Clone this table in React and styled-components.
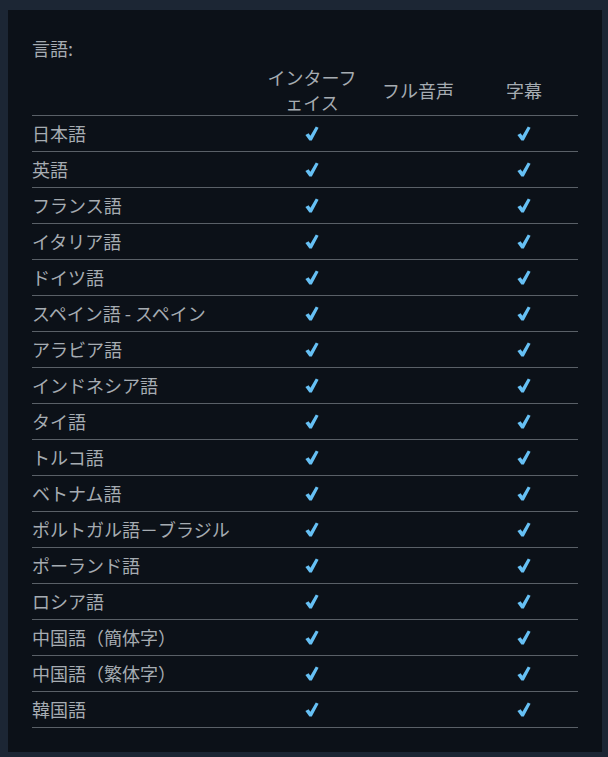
import React from "react";
import styled, { createGlobalStyle } from "styled-components";

const Global = createGlobalStyle`
  html, body { background: #1c2634; }
  body {
    margin: 0;
    padding: 10px 6px 5px 8px;
    font-family: "Noto Sans CJK JP", "Noto Sans", sans-serif;
  }
`;

const Panel = styled.div`
  background: #0c1118;
  padding: 26px 24px 24px;
  color: #a6acb2;
  font-size: 18px;
`;

const Title = styled.div`
  line-height: 24px;
  height: 24px;
  margin-bottom: 5px;
`;

const Row = styled.div`
  display: grid;
  grid-template-columns: 230px 100px 112px 100px;
  align-items: center;
  border-bottom: 1px solid #5a6067;
  height: ${(p) => (p.$head ? "50px" : "35px")};
`;

const Cell = styled.div`
  text-align: ${(p) => (p.$center ? "center" : "left")};
  line-height: ${(p) => (p.$head ? "25px" : "24px")};
  white-space: nowrap;
  margin-top: ${(p) => (p.$head ? "0" : "-1px")};
`;

const CheckWrap = styled.span`
  display: inline-flex;
  justify-content: center;
  align-items: center;
  width: 14px;
  height: 24px;
  vertical-align: top;
`;

const Check = () => (
  <CheckWrap>
    <svg width="14" height="15" viewBox="0 0 14 15">
      <path
        d="M0.4 9.0 L3.6 7.2 L5.4 9.8 L10.8 0.6 L13.6 1.8 L6.8 14.4 L4.4 14.4 Z"
        fill="#66c0f4"
      />
    </svg>
  </CheckWrap>
);

const langs = [
  "日本語",
  "英語",
  "フランス語",
  "イタリア語",
  "ドイツ語",
  "スペイン語 - スペイン",
  "アラビア語",
  "インドネシア語",
  "タイ語",
  "トルコ語",
  "ベトナム語",
  "ポルトガル語－ブラジル",
  "ポーランド語",
  "ロシア語",
  "中国語（簡体字）",
  "中国語（繁体字）",
  "韓国語",
];

export default function App() {
  return (
    <>
      <Global />
      <Panel>
        <Title>言語:</Title>
        <Row $head>
          <Cell $head />
          <Cell $head $center>
            インターフ
            <br />
            ェイス
          </Cell>
          <Cell $head $center>フル音声</Cell>
          <Cell $head $center>字幕</Cell>
        </Row>
        {langs.map((l) => (
          <Row key={l}>
            <Cell>{l}</Cell>
            <Cell $center>
              <Check />
            </Cell>
            <Cell $center />
            <Cell $center>
              <Check />
            </Cell>
          </Row>
        ))}
      </Panel>
    </>
  );
}
